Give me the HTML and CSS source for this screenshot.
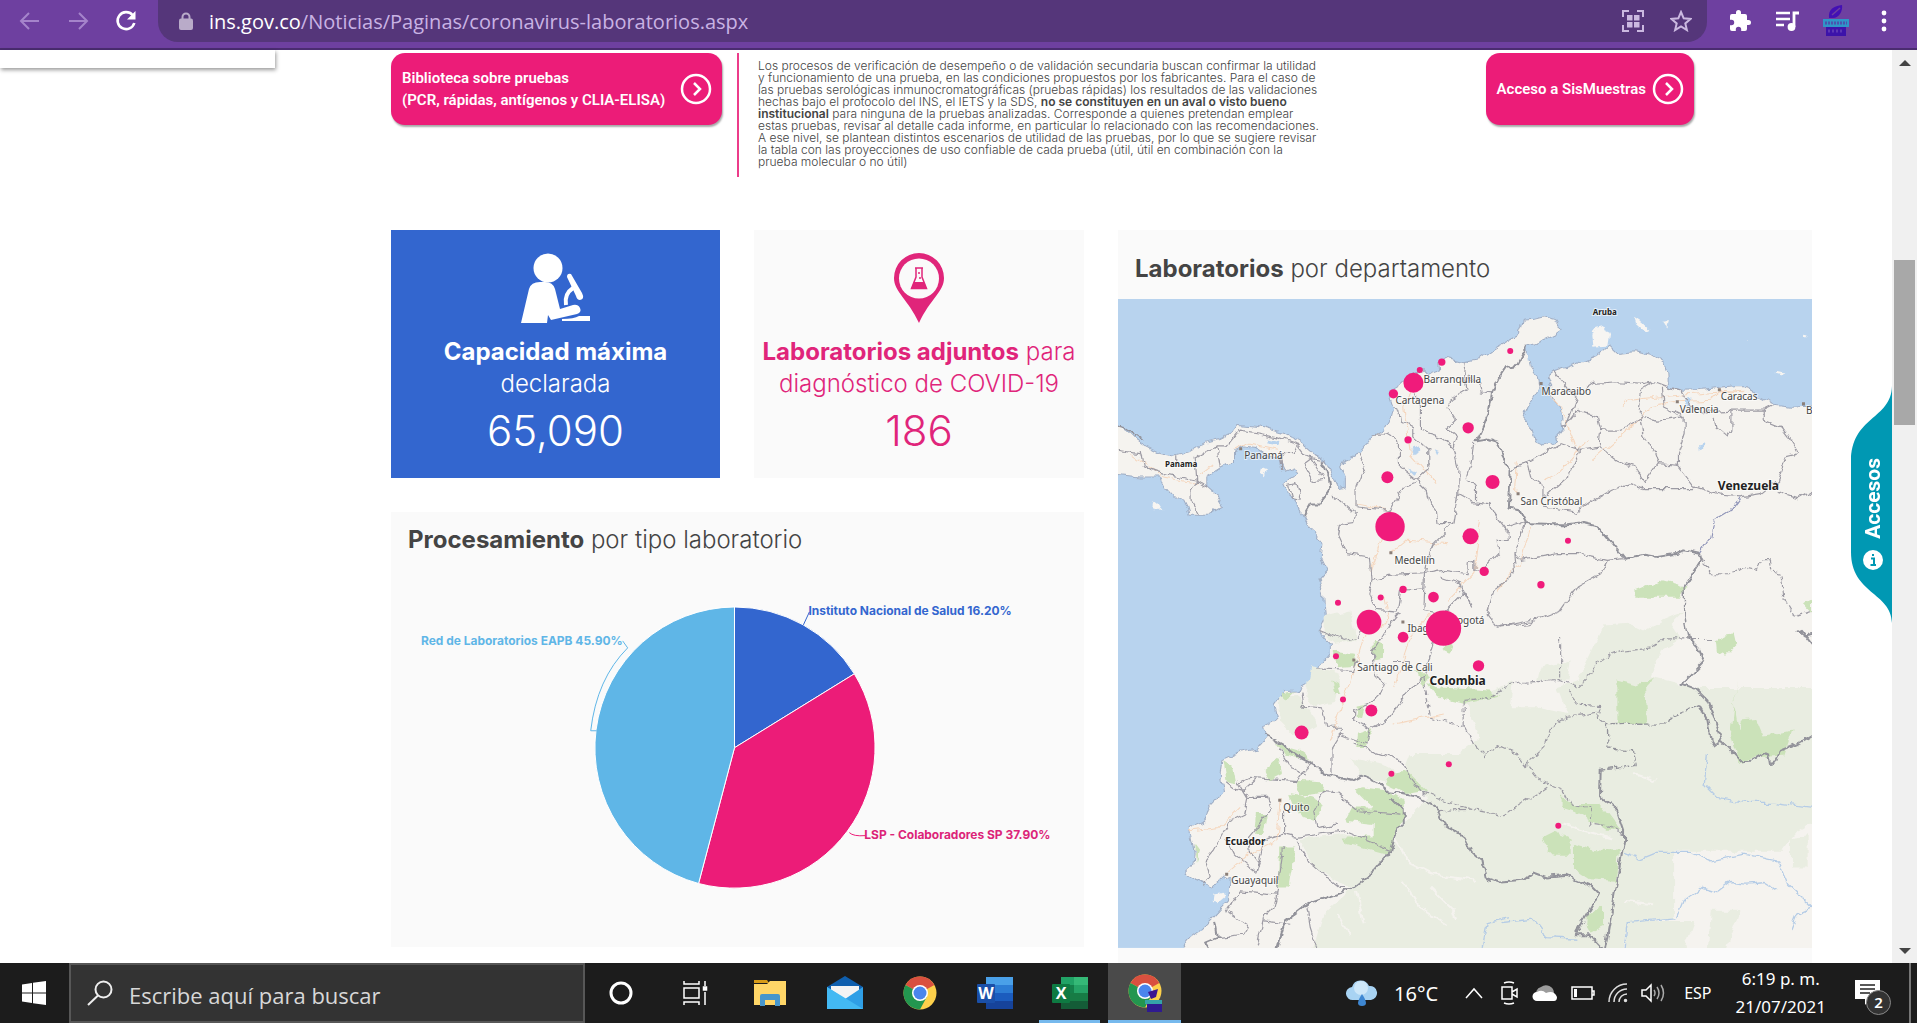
FILE: index.html
```html
<!DOCTYPE html>
<html lang="es">
<head>
<meta charset="utf-8">
<meta name="viewport" content="width=device-width, initial-scale=1">
<title>Coronavirus laboratorios</title>
<link rel="stylesheet" href="styles.css">
</head>
<body>
<header class="browser">
  <nav class="browser-nav" aria-label="Navegación">
    <button class="icon-btn dim" aria-label="Atrás"><svg width="22" height="22" viewBox="0 0 22 22"><path d="M20 11H3M10 3l-8 8 8 8" fill="none" stroke="currentColor" stroke-width="2"/></svg></button>
    <button class="icon-btn dim" aria-label="Adelante"><svg width="22" height="22" viewBox="0 0 22 22"><path d="M2 11h17M12 3l8 8-8 8" fill="none" stroke="currentColor" stroke-width="2"/></svg></button>
    <button class="icon-btn" aria-label="Recargar"><svg width="24" height="24" viewBox="0 0 24 24"><path d="M18.500 6A8.500 8.500 0 1 0 20.300 14" fill="none" stroke="currentColor" stroke-width="2.600"/><path d="M21.500 2v8.500h-8.500z" fill="currentColor"/></svg></button>
  </nav>
  <div class="address">
    <svg class="lock" width="14" height="18" viewBox="0 0 14 18"><path d="M3.500 8V5a3.500 3.500 0 0 1 7 0v3" fill="none" stroke="currentColor" stroke-width="2"/><rect y="6.500" width="14" height="11.500" rx="2" fill="currentColor"/></svg>
    <span class="url"><b>ins.gov.co</b>/Noticias/Paginas/coronavirus-laboratorios.aspx</span>
    <button class="icon-btn soft" aria-label="Código QR"><svg width="22" height="22" viewBox="0 0 22 22"><path d="M1 7V1h6M15 1h6v6M21 15v6h-6M7 21H1v-6" fill="none" stroke="currentColor" stroke-width="2"/><path d="M5 5h5.500v5.500H5zM12 5h5.500v5.500H12zM5 12h5.500v5.500H5zM12 12h5.500v5.500H12z" fill="currentColor"/></svg></button>
    <button class="icon-btn soft" aria-label="Favorito"><svg width="22" height="22" viewBox="0 0 22 22"><path d="M11 2l2.700 6.300 6.800.6-5.200 4.500 1.600 6.700L11 16.500l-5.900 3.600 1.600-6.700-5.200-4.500 6.800-.6z" fill="none" stroke="currentColor" stroke-width="2"/></svg></button>
  </div>
  <div class="browser-tools">
    <button class="icon-btn" aria-label="Extensiones"><svg width="24" height="24" viewBox="0 0 24 24"><path d="M20.500 11H19V7a2 2 0 0 0-2-2h-4V3.500a2.500 2.500 0 0 0-5 0V5H4a2 2 0 0 0-2 2v3.800h1.500a2.700 2.700 0 0 1 0 5.400H2V20a2 2 0 0 0 2 2h3.800v-1.500a2.700 2.700 0 0 1 5.400 0V22H17a2 2 0 0 0 2-2v-4h1.500a2.500 2.500 0 0 0 0-5z" fill="currentColor"/></svg></button>
    <button class="icon-btn" aria-label="Multimedia"><svg width="26" height="22" viewBox="0 0 26 22"><path d="M1 3h14M1 9h14M1 15h8" stroke="currentColor" stroke-width="2.600"/><path d="M19 17V3h5" fill="none" stroke="currentColor" stroke-width="2.800"/><circle cx="16.500" cy="17" r="3.900" fill="currentColor"/></svg></button>
    <button class="icon-btn" aria-label="Perfil"><svg width="28" height="32" viewBox="0 0 28 32"><path d="M7 13C6 4 12 1 20 0c1 6-3 13-9 13z" fill="#4310b4"/><path d="M10 10L18 3" stroke="#6e40a0" stroke-width="1.500"/><rect x="1" y="14" width="26" height="8" fill="#2f95c8"/><path d="M3 18h22" stroke="#4b53ae" stroke-width="3" stroke-dasharray="2 1"/><rect x="4" y="22" width="20" height="9" fill="#3c13aa"/><path d="M6 26h16" stroke="#5e37b5" stroke-width="3" stroke-dasharray="2 2"/></svg></button>
    <button class="icon-btn" aria-label="Menú"><svg width="6" height="22" viewBox="0 0 6 22"><g fill="currentColor"><circle cx="3" cy="3" r="2.400"/><circle cx="3" cy="11" r="2.400"/><circle cx="3" cy="19" r="2.400"/></g></svg></button>
  </div>
</header>

<div class="viewport">
  <main class="page">
    <div class="popup-edge"></div>
    <section class="intro">
      <a class="pink-btn" href="#biblioteca"><span>Biblioteca sobre pruebas<br>(PCR, rápidas, antígenos y CLIA-ELISA)</span>
        <svg width="32" height="32" viewBox="0 0 32 32" fill="none" stroke="currentColor"><circle cx="16" cy="16" r="14" stroke-width="2.500"/><path d="M14 10l6 6-6 6" stroke-width="2.500"/></svg></a>
      <p class="notice">Los procesos de verificación de desempeño o de validación secundaria buscan confirmar la utilidad<br>y funcionamiento de una prueba, en las condiciones propuestos por los fabricantes. Para el caso de<br>las pruebas serológicas inmunocromatográficas (pruebas rápidas) los resultados de las validaciones<br>hechas bajo el protocolo del INS, el IETS y la SDS, <b>no se constituyen en un aval o visto bueno</b><br><b>institucional</b> para ninguna de la pruebas analizadas. Corresponde a quienes pretendan emplear<br>estas pruebas, revisar al detalle cada informe, en particular lo relacionado con las recomendaciones.<br>A ese nivel, se plantean distintos escenarios de utilidad de las pruebas, por lo que se sugiere revisar<br>la tabla con las proyecciones de uso confiable de cada prueba (útil, útil en combinación con la<br>prueba molecular o no útil)</p>
      <a class="pink-btn" href="#sismuestras"><span>Acceso a SisMuestras</span>
        <svg width="32" height="32" viewBox="0 0 32 32" fill="none" stroke="currentColor"><circle cx="16" cy="16" r="14" stroke-width="2.500"/><path d="M14 10l6 6-6 6" stroke-width="2.500"/></svg></a>
    </section>

    <section class="dashboard">
      <article class="card stat stat-blue">
        <svg width="70" height="70" viewBox="0 0 70 70" fill="currentColor"><circle cx="27" cy="15" r="14.500"/><path d="M0 70L8 36q2-7 11-7h5q8 0 10 7l5 20 13-4q5-1 7 3t-3 6L30 67l-3-5-1 8z"/><path d="M46 24q0-4 4-3l11 19q3 6-2 7-3 0-4-4z"/><path d="M52 35q-9 6-7 17" fill="none" stroke="currentColor" stroke-width="4"/><path d="M41 66q12 0 17-3h11v5H41z"/></svg>
        <h2><b>Capacidad máxima</b><br>declarada</h2>
        <strong class="figure">65,090</strong>
      </article>
      <article class="card stat stat-pink">
        <svg width="52" height="70" viewBox="0 0 52 70"><path d="M26 0A25 25 0 0 0 1 25c0 14 14 21 25 45 11-24 25-31 25-45A25 25 0 0 0 26 0z" fill="currentColor"/><circle cx="26" cy="25.500" r="20" fill="#fafafa"/><path d="M22 15h8M23 15v9l-4.500 11.500h15L29 24v-9" fill="none" stroke="currentColor" stroke-width="1.500"/><path d="M21 29h10l3 7H18z" fill="currentColor"/><circle cx="26" cy="20" r="1" fill="currentColor"/><circle cx="27" cy="25" r="1" fill="currentColor"/></svg>
        <h2><b>Laboratorios adjuntos</b> para<br>diagnóstico de COVID-19</h2>
        <strong class="figure">186</strong>
      </article>
      <article class="card chart">
        <h2><b>Procesamiento</b> por tipo laboratorio</h2>
        <svg class="pie" viewBox="0 0 694 380" role="img" aria-label="Procesamiento por tipo laboratorio">
          <g stroke="#fff" stroke-width="1">
            <path d="M344 181V40A141 141 0 0 1 464 107z" fill="#3366cf"/>
            <path d="M344 181L464 107A141 141 0 0 1 308 317z" fill="#ec1c78"/>
            <path d="M344 181L308 317A141 141 0 0 1 344 40z" fill="#5fb6e7"/>
          </g>
          <path d="M413 58l6-13" stroke="#3366cf" fill="none"/>
          <path d="M459 266q4 4 16 3" stroke="#ec1c78" fill="none"/>
          <path d="M232 74l5 7Q206 112 200 164h6" stroke="#5fb6e7" fill="none"/>
          <text x="418" y="48" fill="#3366cf">Instituto Nacional de Salud 16.20%</text>
          <text x="232" y="78" text-anchor="end" fill="#5fb6e7">Red de Laboratorios EAPB 45.90%</text>
          <text x="474" y="272" fill="#dc2478">LSP - Colaboradores SP 37.90%</text>
        </svg>
      </article>
      <article class="card map-card">
        <h2><b>Laboratorios</b> por departamento</h2>
        <svg class="map" viewBox="0 0 693 648" role="img" aria-label="Mapa de laboratorios">
          <defs>
            <filter id="coast" x="0" y="0" width="1" height="1"><feTurbulence type="fractalNoise" baseFrequency="0.090" numOctaves="3" seed="4"/><feDisplacementMap in="SourceGraphic" scale="8" xChannelSelector="R" yChannelSelector="G"/></filter>
          </defs>
          <rect width="693" height="648" fill="#b8d3ee"/>
          <g filter="url(#coast)"><g transform="scale(.33333) translate(-24 -237)" fill="none" stroke-linejoin="round">
            <!-- mainland -->
            <path fill="#f5f3ef" stroke="#9fadc4" stroke-width="3" d="M2130 556L2080 556 2040 558 1990 552 1960 540 1930 525 1910 497 1870 497 1820 502 1770 508 1710 510 1670 500 1668 460 1660 430 1620 405 1570 395 1520 400 1497 378 1470 402 1420 422 1370 440 1330 455 1310 470 1320 495 1320 520 1350 570 1357 630 1330 668 1300 677 1275 665 1265 630 1235 595 1250 560 1270 530 1285 505 1280 470 1260 440 1250 400 1250 378 1290 365 1335 345 1348 325 1330 295 1300 287 1270 295 1235 298 1230 320 1220 345 1190 362 1150 385 1110 415 1060 425 1010 412 985 425 988 455 960 465 940 445 900 465 870 495 845 510 838 530 848 560 838 600 820 630 790 645 770 670 745 700 700 720 690 735 705 770 705 800 685 805 665 760 640 720 610 700 570 665 520 640 450 620 385 613 370 635 330 655 290 665 240 695 190 708 150 700 110 680 80 660 50 630 0 605V760L90 770 150 770 165 800 190 830 215 830 230 860 238 885 290 885 340 858 320 825 290 800 290 770 330 745 370 725 370 695 400 680 440 685 470 705 510 715 525 750 550 740 560 760 520 790 535 820 560 850 580 890 610 935 635 970 630 1010 650 1050 625 1080 640 1120 645 1190 625 1230 660 1270 660 1300 630 1335 600 1385 560 1408 520 1410 490 1450 500 1490 485 1505 460 1515 470 1550 440 1585 390 1595 335 1620 330 1660 340 1710 300 1750 285 1800 240 1820 250 1865 255 1900 250 1935 228 1958 260 1980 310 2000 345 1965 360 1975 355 2040 320 2080 280 2120 240 2150 190 2210H2130z"/>
            <!-- islands -->
            <g fill="#f7f5f2"><path d="M1445 345l10-25 25-5 15 30-5 32-42 3zM1570 290l18 12 25 25-12 5-25-22zM1655 305l22-2-4 25zM130 840l15 12 12 18-20 3-10-15zM1995 456l22 4-6 6-16-4zM2080 350l10 2-4 6-8-2zM1908 356l10 2-8 4zM310 2015l30-5 8 18-30 25-10-12zM455 745l12 5-6 18-10-8z"/></g>
            <!-- forest -->
            <g fill="#e9ede1">
              <path d="M1062 1440L1170 1400 1210 1385 1200 1460 1280 1460 1370 1480 1340 1400 1400 1380 1440 1300 1480 1215 1560 1210 1600 1230 1650 1200 1720 1170 1680 1210 1710 1255 1650 1290 1620 1370 1750 1402 2130 1402V1790L2060 1830 2010 1890H1690V2090L1550 2105 1530 2210H600L640 2080 740 1990 860 1830 950 1730 880 1650 900 1600 1040 1600 1110 1550z"/>
              <path d="M570 1855L700 1840 840 1890 800 1950 720 2000 610 1940zM640 1190l80-20 15 90-60 10-35-30zM600 1340l90 20-20 80-60 20-25-40zM500 1430l60-10 60 90-60 40-50-50zM1290 1340l90-20-10 60-90 0zM1550 2100h200l-40 110h-170zM1800 2070h90l-50 130h-50zM2040 1850l50-10v100h-50zM720 1610l120 30 30 50-110-20z"/>
            </g>
            <!-- parks -->
            <g fill="#cbe2b9">
              <path d="M1570 1110l80-32 80 22-20 32-130 0zM1520 1380l60 15 50-20-30 30 10 105-90 0zM1890 1500l45-5 20 50 90-15-25 75-90 5-45 20-10-60zM1880 1380l-10 70 15 90 35 75-40-10-20-60zM1350 1720l30 30 90 0 60 80-40 0-80-50-60-20zM1295 1850l40-20 45 20 0 55-50 0-20-20zM1390 1870l60 15 75 5-10 90-80-5-45-30zM1430 2080l50-25 0 60-40 20-15-20zM950 1390l30 10 160 10 30 15-110 25-80-20zM670 1290l60 10 10 35-60 5zM755 1700l80 10 45 30 0 60-20 20-20 75-20 5-110-30-10-20 90 0 0-40-85-10 20-40 60 0-50-50zM540 1720l60 10 40 20-20 50-60-20zM510 1880l45 0-20 120-30 0zM460 1650l45-40 10 50-40 20zM560 1680l70 5 20 30-80 10zM840 1660l50-10 60 60-60 10-60-30zM740 1540l50-15-30 60-25 0zM500 1570l70 20 40 30-90-20zM440 1780l30 0-10 60-25 0zM740 1455l25-5-10 40-20-5zM920 1350l40 20-20 30zM1000 1270l30 0-10 30-20-10zM505 1420l50-10-30 30zM660 1380l20 10 10 30-20-5z"/>
              <path d="M1815 1260l25-18 28-3 8 35-30 32-28-12zM2075 1150l28-15v45z"/>
              <path d="M340 1620l25 15 10 50-25-5zM255 1870l15 20-10 30zM790 1260l25 10 0 45-25 5z"/>
            </g>
            <!-- main roads -->
            <g stroke="#f5d6bd" stroke-width="3">
              <path d="M1445 720L1590 595 1620 560 1700 545 1800 540 1830 510 1900 515M1285 495L1350 560 1400 690M1215 820L1220 720M905 500L880 560 900 700 980 790M840 1000L890 960 1010 970M820 1130L835 1200 760 1250 740 1320 700 1440 660 1560M1010 1140L1090 1060 1110 900M510 1735L500 1860 420 1900 350 1960M240 1830L330 1820 390 1760M960 1180L900 1250 850 1400M60 700L160 770 260 790M370 690L410 670 500 690M735 850L840 870 780 1060"/>
              <path d="M1540 560L1550 540 1650 530 1900 510M270 760L310 730M1260 920L1230 1030 1160 1110M1000 1480L850 1510M1430 660L1340 760 1300 780"/>
            </g>
            <!-- rivers -->
            <g stroke="#b5cce6" stroke-width="4">
              <path d="M1170 2105L1270 2095 1310 2150 1400 2155M1540 1895L1590 1915 1640 1895 1740 1895 1800 1920 1900 1900 2000 1920 2030 1990 2103 2060 2060 2080 2040 2130M1700 2090L1720 2040 1770 2000 1820 2015 1860 1985 1910 1990 1960 1985 2000 2010M1700 2090L1550 2105 1540 2181M1790 1600L1780 1690 1820 1730 1900 1745 1990 1745 2103 1760M1115 2181L1130 2105 1200 2090"/>
            </g>
            <g stroke="#f5f3ef" stroke-width="6"><path d="M850 1850L900 1930 960 1960 1100 1980M880 1980L930 2060 1010 2110M1570 1660L1640 1680M1540 2040L1630 2050M740 2010L760 2110M1350 1810L1420 1830 1500 1850M680 2080L720 2140M960 2000L1030 2070 1040 2100"/></g>
            <g fill="#b8d3ee"><path d="M1720 540l25-5-5 25-15 3zM1765 675l12-6 0 20-10 4zM475 655l35 8-10 12-30-6zM900 690l20-10 10 15-15 8zM970 690l12 5-5 10zM890 745l30 10-10 10zM1248 395l10 20-6 12z"/></g>
            <!-- department borders -->
            <g stroke="#9c9aa3" stroke-width="3.500">
              <path d="M1067 425L1062 470 1070 510 1020 540 1010 560 1035 600 1010 625 1040 650 1030 680 1045 740 1045 820 1030 910 980 910 975 870 960 850 950 810 920 780 955 750 955 690 910 650 910 620 870 600 865 570 848 560M915 520L930 560 930 630 990 650 1035 685M1145 518L1115 515 1110 490 1070 470M790 645L830 645 870 670 870 740 920 780M745 700L765 740 740 800 740 860 840 870 880 800 930 780M665 822L735 880 730 910 690 915 685 945 710 1000 780 1010 785 1080 840 1065 940 1060 1000 1050 1070 1060 1070 1030 1090 1025 1090 1050 1120 1045 1165 1000 1160 960 1190 960 1190 930 1150 880 1135 850 1090 845 1045 820M1090 665L1080 740 1070 770 1095 800 1095 840M1030 910L970 970 950 1020 945 1060 940 1170 1000 1180 1060 1120 1080 1160 1050 1090 990 1070M1190 920L1240 905M1245 908L1210 1000 1215 1060 1150 1110 1130 1180 1160 1220 1260 1200M1210 1000L1230 1020 1340 1000 1400 1000 1490 1020 1540 1015M1490 1020L1470 1060 1400 1100 1350 1170 1250 1210 1170 1220"/>
              <path d="M785 1080L775 1120 800 1170 860 1175 870 1110 940 1105M780 1170L740 1250 700 1260 625 1230M870 1175L840 1210 790 1290 790 1360 820 1390 810 1420 780 1450 730 1470 730 1500 780 1525 830 1500 900 1400 940 1370 970 1270 1000 1190M620 1345L730 1350 740 1320M575 1410L580 1460 640 1465 650 1520 690 1520 690 1550 665 1590 665 1660M780 1525L770 1570 690 1540M730 1570L780 1590 870 1620 900 1670 940 1720M850 1320L900 1320 900 1360"/>
              <path d="M1350 1250V1380M1058 1520V1440L1140 1430 1180 1400 1240 1385 1350 1380 1400 1400 1440 1360 1460 1320 1530 1290 1620 1280 1660 1255 1740 1255M1060 1520L1080 1560 1125 1605 1160 1575 1220 1600 1250 1640 1245 1630M1370 1410L1400 1450 1470 1455 1460 1490 1490 1512M1460 1475L1370 1490 1320 1520 1300 1580 1250 1630 1290 1680 1360 1710 1380 1750 1440 1760 1440 1810 1500 1820 1540 1840M1310 1700L1230 1750 1180 1785 1080 1765 980 1770" stroke-dasharray="16 5"/>
              <path d="M940 1370L960 1490 1060 1520M940 1715L1000 1740 1080 1765" stroke-dasharray="14 6"/>
              <path d="M90 690L100 740 160 760 260 780 255 710 290 690 320 680 350 680 390 630 450 640 500 650 560 670 590 710 640 720M320 680L330 740M260 780L240 810 240 840 265 885M260 780L290 800M200 708V730M24 690L90 700M560 675L550 700 515 700 517 750M580 730L600 715 640 780 610 785zM535 795L560 790 570 840 545 835z"/>
              <path d="M1330 455L1370 510 1400 525 1380 580 1370 610 1355 615M1400 525L1450 490 1520 485 1600 490 1630 485 1670 500 1710 510 1740 560 1800 575 1860 570 1960 570 1990 555M1630 485L1590 510 1580 560 1600 590 1550 620 1520 630 1470 630 1460 590 1400 570 1370 610M1470 630L1465 680 1410 690 1350 670M1410 690L1380 760 1300 830 1300 800 1260 770 1250 730 1215 740 1200 755M1250 730L1350 670M1465 680L1520 720 1570 740 1600 785 1640 730 1630 700 1600 650 1590 590 1640 600 1720 590 1720 640 1700 700 1700 735 1640 730M1700 735L1750 800 1830 825 1890 830 1950 820 2000 780 2025 710 2065 700 2040 660 2010 620 1960 600 1960 570M1860 570L1860 630 1850 650 1815 620 1810 590M1655 500L1660 560 1720 590M1300 860L1400 875 1450 840 1500 810 1560 790 1600 805 1750 805M2000 815L2060 835 2103 810"/>
              <path d="M1890 830L1860 870 1810 900 1800 950 1765 1000" stroke="#8f94b8"/>
              <path d="M1770 1010L1800 1060 1870 1060 1900 1040 1940 1050 1950 1015 1975 1015 1980 1050 2010 1060 2020 1140 2050 1190 2103 1170M1740 1257H1805" stroke-dasharray="18 6"/>
              <path d="M380 1680L410 1730 400 1780 360 1800 310 1890 285 1920 300 1960 280 2000M380 1690L420 1670 560 1680 590 1640 610 1620M410 1730L470 1730 480 1760 440 1820 415 1850 420 1890 450 1930 440 1960 370 1900 350 1860M520 1770L520 1840 560 1850 700 1830 840 1885M520 1840L460 1860 440 1960M560 1860L600 1930 690 2000 710 2000M640 1715L680 1720 740 1770 870 1780M640 1715L610 1770 620 1820 680 1810M510 1590L540 1640 590 1660M520 1880L500 2020 390 2010 370 2040 350 2070 410 2110 400 2140 320 2150M500 2020L490 2060 460 2090 440 2181M590 2060L600 2120 620 2181M460 2100L540 2110M440 1675L400 1710 370 1700 345 1680"/>
            </g>
            <!-- national borders -->
            <g stroke="#92929a" stroke-width="6">
              <path d="M1250 378L1220 435 1190 440 1170 470 1145 520 1135 580 1098 660 1130 655 1160 665 1175 710 1200 755 1195 865 1225 870 1245 908 1330 912 1370 912 1420 905 1460 915 1540 1015 1600 1003 1640 1010 1700 1000 1720 990 1765 1000 1770 1020 1745 1060 1720 1100"/>
              <path d="M1720 1100L1722 1190 1735 1255" stroke-width="4"/>
              <path d="M1735 1255L1765 1285 1780 1320 1715 1390 1755 1405 1790 1440 1810 1490 1830 1560 1890 1622 1920 1620 1965 1595 1975 1600 1980 1630 2000 1625 2010 1590 2060 1570 2110 1540M1830 1560L1810 1575 1800 1560 1790 1500 1765 1455M2120 1290L2070 1225 2060 1230 2080 1245 2110 1240"/>
              <path d="M1765 1455L1680 1490 1670 1510 1490 1512 1492 1585 1565 1590 1573 1635 1470 1645" stroke-width="4" stroke-dasharray="18 6"/>
              <path d="M1470 1645L1468 1730 1520 1770 1540 1830 1540 1860 1482 2190 1435 2140 1395 2140 1465 2020 1440 1995 1370 1965 1310 1970 1270 1955 1240 1980 1170 1985 1125 1970 1115 1920 1080 1890 1060 1850 1000 1810 980 1760 930 1730 880 1720 840 1715 800 1685 755 1665 725 1680 640 1660 610 1630 570 1610 520 1575 465 1545M840 1730L880 1770 880 1815 862 1815 842 1890 790 1950 720 2005 590 2050 525 2100 500 2190M300 2190L285 2165 320 2150 312 2100M630 720L655 770 660 805 625 850 600 850 580 885M24 620L50 625 100 660"/>
            </g>
          </g></g>
          <g class="labels">
            <text x="126" y="160">Panamá</text><text x="305" y="84">Barranquilla</text><text x="277" y="105">Cartagena</text><text x="276" y="265">Medellín</text><text x="423" y="96">Maracaibo</text><text x="561" y="114">Valencia</text><text x="602" y="101">Caracas</text><text x="687" y="115">B</text><text x="402" y="206">San Cristóbal</text><text x="332" y="325">Bogotá</text><text x="289" y="333">Ibagué</text><text x="239" y="371">Santiago de Cali</text><text x="165" y="511">Quito</text><text x="113" y="584">Guayaquil</text>
            <g class="strong"><text x="311" y="385">Colombia</text><text x="599" y="191">Venezuela</text></g>
            <g class="mid"><text x="107" y="545">Ecuador</text></g>
            <g class="tiny"><text x="47" y="168">Panama</text><text x="474" y="16">Aruba</text></g>
          </g>
          <g fill="#8b7f78"><path d="M121 148h3v3h-3zM271 252h3v3h-3zM421 83h3v3h-3zM557 101h3v3h-3zM599 89h3v3h-3zM683 103h3v3h-3zM398 193h3v3h-3zM283 321h3v3h-3zM234 359h3v3h-3zM160 499h3v3h-3zM107 573h3v3h-3z"/></g>
          <g transform="scale(.33333) translate(-24 -237)" fill="#f01b7b">
            <circle cx="909" cy="488" r="30"/><circle cx="928" cy="450" r="9"/><circle cx="994" cy="426" r="11"/><circle cx="849" cy="521" r="14"/><circle cx="1199" cy="393" r="9"/><circle cx="1073" cy="623" r="17"/><circle cx="893" cy="659" r="11"/><circle cx="831" cy="771" r="18"/><circle cx="1146" cy="785" r="21"/><circle cx="839" cy="919" r="44"/><circle cx="1080" cy="948" r="24"/><circle cx="1121" cy="1053" r="14"/><circle cx="1372" cy="961" r="9"/><circle cx="1291" cy="1093" r="11"/><circle cx="878" cy="1107" r="11"/><circle cx="811" cy="1131" r="9"/><circle cx="969" cy="1130" r="16"/><circle cx="683" cy="1147" r="9"/><circle cx="776" cy="1205" r="37"/><circle cx="999" cy="1223" r="53"/><circle cx="878" cy="1250" r="16"/><circle cx="677" cy="1307" r="9"/><circle cx="1104" cy="1336" r="17"/><circle cx="698" cy="1437" r="9"/><circle cx="783" cy="1470" r="18"/><circle cx="574" cy="1536" r="21"/><circle cx="1015" cy="1631" r="9"/><circle cx="843" cy="1659" r="9"/><circle cx="1343" cy="1815" r="9"/>
          </g>
        </svg>
      </article>
    </section>
    <button class="side-tab">
      <svg class="side-shape" viewBox="0 0 41 237" preserveAspectRatio="none"><path d="M41 0C40 34 0 30 0 76V166C0 208 40 206 41 237z" fill="#0098b3"/></svg>
      <svg class="side-info" width="20" height="20" viewBox="0 0 20 20"><circle cx="10" cy="10" r="10" fill="#fff"/><path d="M8 8.500h3V15M7.500 15h5.500M9 5h2" stroke="#0098b3" stroke-width="2" fill="none"/></svg>
      <span>Accesos</span>
    </button>
  </main>
  <div class="scrollbar" aria-hidden="true">
    <svg width="12" height="6" viewBox="0 0 12 6"><path d="M6 0l6 6H0z" fill="#444"/></svg>
    <div class="track"><div class="thumb"></div></div>
    <svg width="12" height="6" viewBox="0 0 12 6"><path d="M6 6l6-6H0z" fill="#444"/></svg>
  </div>
</div>

<footer class="taskbar">
  <button class="start" aria-label="Inicio"><svg width="24" height="24" viewBox="0 0 24 24" fill="#fff"><path d="M0 3.400L10 2v9.500H0zM11 1.800L24 0v11.500H11zM0 12.500h10V22L0 20.600zM11 12.500h13V24l-13-1.800z"/></svg></button>
  <label class="search"><svg width="26" height="26" viewBox="0 0 26 26" fill="none" stroke="#eee" stroke-width="2"><circle cx="16.500" cy="9.500" r="8"/><path d="M11 15.500L1 25"/></svg><input type="text" placeholder="Escribe aquí para buscar" aria-label="Buscar"></label>
  <div class="apps">
    <button aria-label="Cortana"><svg width="24" height="24" viewBox="0 0 24 24"><circle cx="12" cy="12" r="10" fill="none" stroke="#fff" stroke-width="3"/></svg></button>
    <button aria-label="Vista de tareas"><svg width="26" height="26" viewBox="0 0 26 26" fill="none" stroke="#fff" stroke-width="1.500"><path d="M2 1v3h15V1M2 8h15v10H2zM2 25v-3h15v3M23 1v5M23 12v13"/><path d="M21.500 7h3v3h-3z" fill="#fff"/></svg></button>
    <button aria-label="Explorador"><svg width="34" height="28" viewBox="0 0 34 28"><path d="M1 1h13l2 3H1z" fill="#d79b17"/><path d="M1 5h13l3-3h16v24H1z" fill="#ffd667"/><path d="M7 27V17q0-2 2-2h16q2 0 2 2v10h-5v-6H12v6z" fill="#4796cc"/></svg></button>
    <button aria-label="Correo"><svg width="36" height="34" viewBox="0 0 36 34"><path d="M0 11L18 0l18 11v4H0z" fill="#0f5fae"/><path d="M4 10h28v8L18 27 4 18z" fill="#f4f4f4"/><path d="M0 11l18 12 18-12v22H0z" fill="#2f9fe6"/><path d="M0 11l36 22H0z" fill="#43b9f3"/></svg></button>
    <button aria-label="Chrome"><svg width="34" height="34" viewBox="0 0 34 34"><circle cx="17" cy="17" r="16.500" fill="#fdd04b"/><path d="M17 17L2.500 9A16.500 16.500 0 0 1 31.300 9z" fill="#d9503f"/><path d="M2.500 9A16.500 16.500 0 0 0 17 33.500l7-13-7-3.500z" fill="#23964f"/><circle cx="17" cy="17" r="8" fill="#fff"/><circle cx="17" cy="17" r="6.500" fill="#4a85ed"/></svg></button>
    <button aria-label="Word"><svg width="36" height="32" viewBox="0 0 36 32"><path d="M9 0h27v8H9z" fill="#4aa0e8"/><path d="M9 8h27v8H9z" fill="#2c7cd4"/><path d="M9 16h27v8H9z" fill="#1b5cbe"/><path d="M9 24h27v8H9z" fill="#16439a"/><rect y="7" width="18" height="19" rx="1" fill="#1a4fa8"/><text x="9" y="22" text-anchor="middle">W</text></svg></button>
    <button class="running" aria-label="Excel"><svg width="36" height="32" viewBox="0 0 36 32"><path d="M9 0h27v8H9z" fill="#35b977"/><path d="M9 0h13v16H9z" fill="#21a366"/><path d="M9 8h13v8H9z" fill="#14804a"/><path d="M22 8h14v8H22z" fill="#25a366"/><path d="M9 16h27v8H9z" fill="#177c45"/><path d="M9 24h27v8H9z" fill="#145c37"/><rect y="7" width="18" height="19" rx="1" fill="#0e7a42"/><text x="9" y="22" text-anchor="middle">X</text></svg></button>
    <button class="running active" aria-label="Chrome, ventana activa"><svg width="34" height="38" viewBox="0 0 34 38"><circle cx="17" cy="17" r="16.500" fill="#fdd04b"/><path d="M17 17L2.500 9A16.500 16.500 0 0 1 31.300 9z" fill="#d9503f"/><path d="M2.500 9A16.500 16.500 0 0 0 17 33.500l7-13-7-3.500z" fill="#23964f"/><circle cx="17" cy="17" r="8" fill="#fff"/><circle cx="17" cy="17" r="6.500" fill="#4a85ed"/><path d="M20 18l10-3-2 8-5 2z" fill="#3d1690"/><path d="M17 26h17v4H17z" fill="#35a3a8"/><path d="M19 30h15v8H19z" fill="#2f1a90"/></svg></button>
  </div>
  <div class="tray">
    <svg width="32" height="26" viewBox="0 0 32 26"><path d="M7 20a6.500 6.500 0 0 1-1-13A9 9 0 0 1 23 6a7 7 0 0 1 2 14z" fill="#a8d3f3"/><circle cx="15" cy="8" r="7" fill="#cde7f9"/><path d="M16 14q8 12 0 12t0-12z" fill="#3e87d2"/></svg>
    <span class="temp">16°C</span>
    <svg width="18" height="12" viewBox="0 0 18 12"><path d="M1 11l8-9 8 9" fill="none" stroke="#fff" stroke-width="1.500"/></svg>
    <svg class="cam" width="18" height="24" viewBox="0 0 18 24" fill="none" stroke="#fff" stroke-width="1.500"><path d="M1 6h10v12H1zM11 11l5-3v8l-5-3M3 2q5-2 10 0M3 22q5 2 10 0"/></svg>
    <svg width="26" height="18" viewBox="0 0 26 18"><path d="M5 12A6 6 0 0 1 9 3a8 8 0 0 1 13 6z" fill="#9c9c9c"/><path d="M5 17a4.500 4.500 0 0 1 0-9q5-3 9 1 8-3 11 4 0 4-3 4z" fill="#fff"/></svg>
    <svg width="24" height="14" viewBox="0 0 24 14"><path d="M1 1h20v12H1zM21 5h2v4h-2" fill="none" stroke="#fff" stroke-width="1.500"/><path d="M3 3h3v8H3z" fill="#fff"/></svg>
    <svg width="20" height="20" viewBox="0 0 20 20" fill="none" stroke="#ddd" stroke-width="1.500"><path d="M1 19A18 18 0 0 1 19 1M6 19A13 13 0 0 1 19 6M11 19a8 8 0 0 1 8-8"/><circle cx="17.500" cy="17.500" r="1" fill="#fff"/></svg>
    <svg width="24" height="20" viewBox="0 0 24 20" fill="none" stroke="#fff" stroke-width="1.500"><path d="M1 7h4l5-5v16l-5-5H1z"/><path d="M13 7q2 3 0 6M16 4q4 6 0 12M20 2q5 8 0 16" stroke="#aaa"/></svg>
    <span class="lang">ESP</span>
    <time class="clock">6:19 p. m.<br>21/07/2021</time>
    <button class="notes" aria-label="2 notificaciones"><svg width="25" height="26" viewBox="0 0 25 26"><path d="M0 0h25v19H15l-5 6v-6H0z" fill="#fff"/><path d="M5 5h15M5 9h15M5 13h10" stroke="#222" stroke-width="1.500"/></svg><span class="badge">2</span></button>
  </div>
</footer>
</body>
</html>
```
FILE: styles.css
```css
* { box-sizing: border-box; }
body {
  margin: 0;
  min-height: 100vh;
  display: flex;
  flex-direction: column;
  background: #fff;
  font-family: "Inter", "Liberation Sans", sans-serif;
  color: #444;
}
button { border: 0; padding: 0; background: none; color: inherit; font: inherit; cursor: pointer; }
svg { display: block; flex: none; }
h2, p { margin: 0; }

/* browser bar */
.browser {
  height: 50px;
  display: flex;
  align-items: flex-start;
  background: #6e40a0;
  border-bottom: 2px solid #4a2c70;
  color: #fff;
}
.browser-nav { display: flex; gap: 16px; padding-left: 14px; width: 158px; }
.icon-btn { width: 32px; height: 42px; display: flex; align-items: center; justify-content: center; flex: none; }
.dim { color: #a584cb; }
.soft { color: #cbb9e0; }
.address {
  flex: 1;
  height: 42px;
  display: flex;
  align-items: center;
  gap: 16px;
  padding: 0 10px 0 21px;
  background: #55367a;
  border-radius: 0 0 20px 20px;
  font: 20px "Open Sans", "Noto Sans", sans-serif;
  color: #c9b3e4;
}
.lock { color: #b9abc9; }
.url { flex: 1; }
.url b { font-weight: 400; color: #fff; }
.browser-tools { display: flex; gap: 16px; padding: 0 17px 0 17px; }

/* page */
.viewport { flex: 1; display: flex; }
.page { flex: 1; position: relative; padding: 3px 80px 0 391px; }
.popup-edge {
  position: absolute;
  left: 0;
  top: 0;
  width: 275px;
  height: 18px;
  background: #fff;
  box-shadow: 1px 2px 4px rgba(0, 0, 0, .4);
}
.intro { display: flex; align-items: flex-start; height: 177px; }
.pink-btn {
  height: 72px;
  display: flex;
  align-items: center;
  gap: 6px;
  padding: 0 10px 0 11px;
  border-radius: 14px;
  background: #ec1c78;
  box-shadow: 1px 2px 2px rgba(0, 0, 0, .35);
  color: #fff;
  font: 600 15px/22px "Roboto", sans-serif;
  text-decoration: none;
  white-space: nowrap;
}
.pink-btn:first-child { width: 331px; justify-content: space-between; }
.notice {
  flex: 1;
  margin-left: 15px;
  padding: 7px 0 9px 19px;
  border-left: 2px solid #ec3c8a;
  font-size: 12px;
  line-height: 12px;
  font-weight: 300;
  white-space: nowrap;
}
.notice b { font-weight: 600; }
.pink-btn:last-child { margin-right: 118px; }

.dashboard {
  display: grid;
  grid-template-columns: 329fr 330fr 694fr;
  column-gap: 34px;
  row-gap: 34px;
  grid-template-rows: 248px auto;
}
.card { background: #fafafa; }
.card h2 { font-size: 24px; line-height: 32px; font-weight: 300; }
.card h2 b { font-weight: 700; }
.stat { display: flex; flex-direction: column; align-items: center; padding-top: 23px; text-align: center; }
.stat-blue { background: #3366cf; color: #fff; }
.stat-pink { color: #e0257a; }
.card.stat h2 { margin-top: 13px; white-space: nowrap; }
.figure { font-size: 42px; line-height: 48px; font-weight: 300; margin-top: 7px; }
.chart { grid-column: 1 / 3; padding-top: 12px; height: 435px; overflow: hidden; }
.chart h2, .map-card h2 { padding-left: 17px; }
.pie { width: 100%; height: auto; margin-top: 11px; }
.pie text { font-size: 12px; font-weight: 700; }
.map-card { grid-column: 3; grid-row: 1 / 3; padding-top: 23px; margin-bottom: -16px; }
.map { width: 100%; height: auto; margin-top: 14px; }
.labels { font: 10px "Noto Sans", sans-serif; fill: #444; stroke: #fff; stroke-width: 2px; stroke-opacity: .6; paint-order: stroke; }
.labels .strong { font-size: 12px; font-weight: 700; fill: #222; }
.labels .mid { font-size: 10px; font-weight: 700; fill: #222; }
.labels .tiny { font-size: 8px; font-weight: 700; fill: #222; }

.side-tab {
  position: absolute;
  right: 0;
  top: 336px;
  width: 41px;
  height: 237px;
  display: flex;
  flex-direction: column-reverse;
  align-items: center;
  justify-content: flex-start;
  padding: 0 0 53px 3px;
  gap: 11px;
  color: #fff;
  font: 700 21px/24px "Roboto", sans-serif;
}
.side-shape { position: absolute; inset: 0; width: 100%; height: 100%; }
.side-info { position: relative; }
.side-tab span { position: relative; writing-mode: vertical-rl; transform: rotate(180deg); }

.scrollbar {
  width: 25px;
  display: flex;
  flex-direction: column;
  align-items: center;
  padding: 10px 0 9px;
  background: #f0f0f0;
}
.track { flex: 1; width: 21px; padding-top: 194px; }
.thumb { height: 165px; background: #a8a8a8; }

/* taskbar */
.taskbar { height: 60px; position: relative; z-index: 1; display: flex; background: #1c1c1c; color: #fff; font-family: "Noto Sans", "Open Sans", sans-serif; }
.start { width: 67px; margin-right: 2px; display: flex; align-items: center; justify-content: center; }
.search { width: 516px; display: flex; align-items: center; gap: 16px; padding-left: 16px; background: #333; border: 2px solid #575757; }
.search input { flex: 1; border: 0; padding: 3px 0 0; background: none; outline: 0; color: #fff; font: 22px "Open Sans", "Noto Sans", sans-serif; }
.search input::placeholder { color: #d8d8d8; opacity: 1; }
.apps { display: flex; }
.apps button { width: 75px; display: flex; align-items: center; justify-content: center; border: 0 solid #76b9ed; }
.apps button:first-child { width: 72px; }
.apps text { font: 700 16px "Open Sans", sans-serif; fill: #fff; }
.apps .running { border-bottom-width: 3px; padding-top: 3px; width: 61px; margin: 0 7px; }
.apps .active { width: 73px; margin: 0 1px; background: #4a4a4a; }
.tray { margin-left: auto; display: flex; align-items: center; gap: 13px; margin-right: 6px; padding-right: 18px; border-right: 2px solid #777; }
.temp { font-size: 20px; margin: 0 14px 0 3px; }
.cam { margin-left: 5px; }
.lang { font-size: 16px; margin-left: 6px; }
.clock { font-size: 17px; line-height: 28px; text-align: center; margin: 0 16px 0 11px; }
.notes { position: relative; width: 36px; height: 26px; }
.badge {
  position: absolute;
  right: 0;
  top: 10px;
  width: 25px;
  height: 25px;
  border: 1px solid #888;
  border-radius: 50%;
  background: #333;
  font-size: 15px;
  font-weight: 600;
  line-height: 23px;
  text-align: center;
}
```
